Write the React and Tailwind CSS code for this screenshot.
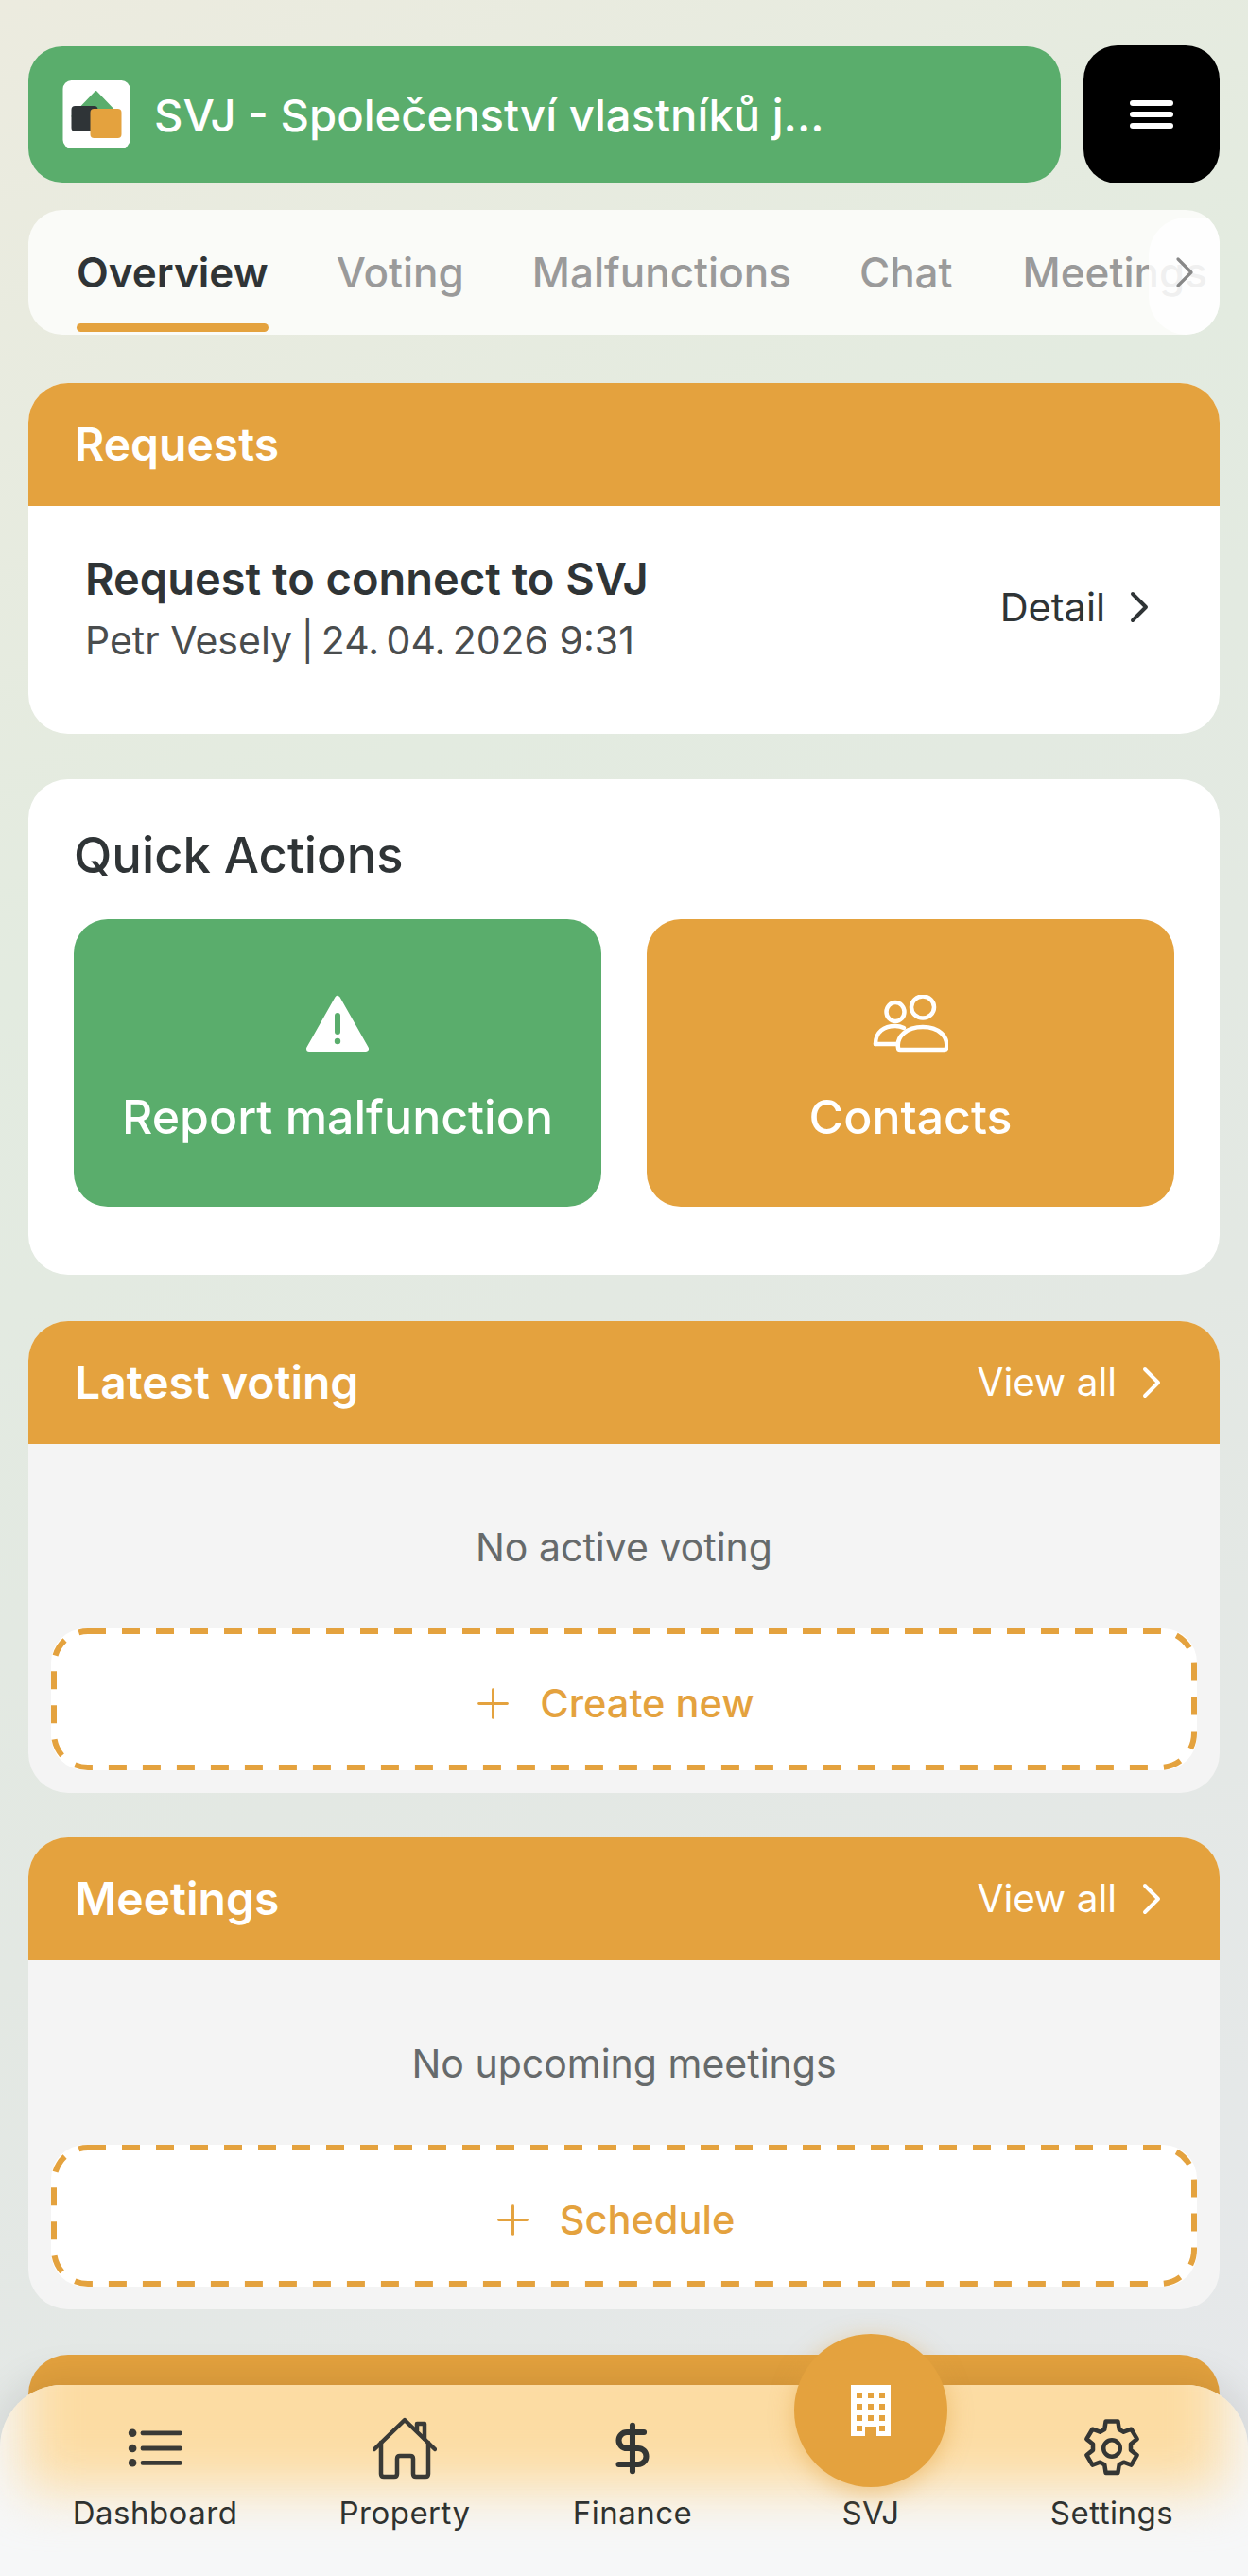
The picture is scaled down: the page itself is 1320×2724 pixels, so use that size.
import React from "react";
import { ChevronRight, Plus, DollarSign } from "lucide-react";

const font = { fontFamily: "Inter, 'Noto Sans', sans-serif" };

function Logo() {
  return (
    <svg width="72" height="72" viewBox="0 0 71 72" className="shrink-0">
      <rect width="71" height="72" rx="9" fill="#fff" />
      <path d="M35 12 L60 38 L10 38 Z" fill="#5aad6c" strokeLinejoin="round" stroke="#5aad6c" strokeWidth="2" />
      <rect x="9" y="27" width="28" height="27" rx="4" fill="#2f3437" />
      <rect x="29" y="30" width="33" height="31" rx="4" fill="#e4a23e" />
    </svg>
  );
}

function WarnIcon() {
  return (
    <svg width="66" height="62" viewBox="0 0 66 62">
      <path d="M33 4 L63 57 H3 Z" fill="#fff" stroke="#fff" strokeWidth="6" strokeLinejoin="round" />
      <rect x="30" y="19" width="6" height="23" rx="3" fill="#5aad6c" />
      <circle cx="33" cy="49" r="3.2" fill="#5aad6c" />
    </svg>
  );
}

function UsersIcon() {
  return (
    <svg width="80" height="62" viewBox="0 0 80 62" fill="none" stroke="#fff" strokeWidth="4.5" strokeLinecap="round" strokeLinejoin="round">
      <ellipse cx="24" cy="18" rx="9.5" ry="10" />
      <ellipse cx="53" cy="13" rx="12" ry="11.5" />
      <path d="M3 52 C3 39 12 33 24 33 C28 33 31 34 33 35" />
      <path d="M3 52 H25" />
      <path d="M27 56 C25 44 36 34 53 34 C70 34 80 44 78 56 C78 57.5 77 58 76 58 H29 C28 58 27 57.5 27 56 Z" />
    </svg>
  );
}

function HouseIcon() {
  return (
    <svg width="68" height="66" viewBox="0 0 68 66" fill="none" stroke="#3a3a36" strokeWidth="4.5" strokeLinecap="round" strokeLinejoin="round">
      <path d="M2 34 L34 3 L66 34" />
      <path d="M47 14 V7 H55 V23" />
      <path d="M9 27 V60 Q9 63 12 63 H23 Q26 63 26 60 V44 Q26 41 29 41 H40 Q43 41 43 44 V60 Q43 63 46 63 H56 Q59 63 59 60 V27" />
    </svg>
  );
}

function ListIcon() {
  return (
    <svg width="58" height="42" viewBox="0 0 60 44" fill="#3a3a36">
      <circle cx="5" cy="5" r="4.5" />
      <circle cx="5" cy="22" r="4.5" />
      <circle cx="5" cy="38" r="4.5" />
      <rect x="14" y="2.5" width="46" height="5" rx="2" />
      <rect x="14" y="19.5" width="46" height="5" rx="2" />
      <rect x="14" y="35.5" width="46" height="5" rx="2" />
    </svg>
  );
}

function GearIcon() {
  return (
    <svg width="64" height="66" viewBox="0 0 24 24" fill="none" stroke="#343634" strokeWidth="1.7" strokeLinejoin="round">
      <path d="M9.6 1.3h4.8l.5 3.2 1.8 1 3-1.1 2.3 3.9-2.5 2v2.4l2.5 2-2.3 3.9-3-1.1-1.8 1-.5 3.2H9.6l-.5-3.2-1.8-1-3 1.1-2.3-3.9 2.5-2v-2.4l-2.5-2 2.3-3.9 3 1.1 1.8-1z" />
      <circle cx="12" cy="12" r="3.3" />
    </svg>
  );
}

function BuildingIcon() {
  return (
    <svg width="42" height="54" viewBox="0 0 42 54">
      <path fill="#fff" d="M0 0H42V54H27V44H15V54H0Z" />
      <g fill="#e4a23e">
        <rect x="6" y="8" width="6" height="6" /><rect x="18" y="8" width="6" height="6" /><rect x="30" y="8" width="6" height="6" />
        <rect x="6" y="20" width="6" height="6" /><rect x="18" y="20" width="6" height="6" /><rect x="30" y="20" width="6" height="6" />
        <rect x="6" y="32" width="6" height="6" /><rect x="18" y="32" width="6" height="6" /><rect x="30" y="32" width="6" height="6" />
        <rect x="6" y="43" width="6" height="6" /><rect x="30" y="43" width="6" height="6" />
      </g>
    </svg>
  );
}

function SectionHeader({ title, action }) {
  return (
    <div className="h-[130px] bg-[#e4a23e] flex items-center justify-between pl-[49px] pr-[44px]">
      <span className="text-[48px] font-semibold text-white leading-none">{title}</span>
      {action && (
        <span className="flex items-center gap-[9px] text-[40.5px] text-white">
          {action}
          <ChevronRight size={56} strokeWidth={1.7} />
        </span>
      )}
    </div>
  );
}

function EmptyCard({ title, empty, cta }) {
  return (
    <section className="rounded-[42px] overflow-hidden bg-[#f4f4f4]">
      <SectionHeader title={title} action="View all" />
      <div className="px-[24px] pb-[24px]">
        <p className="h-[195px] pt-[24px] flex items-center justify-center text-[41px] text-[#666a6b]">{empty}</p>
        <div className="relative h-[150px] rounded-[36px] bg-white flex items-center justify-center gap-[24px] pt-[8px] pr-[26px] text-[41.5px] font-medium text-[#e4a23e]">
          <svg className="absolute inset-0" width="1212" height="150" fill="none">
            <rect x="3" y="3" width="1206" height="144" rx="36" stroke="#e4a23e" strokeWidth="6" strokeDasharray="19 17" />
          </svg>
          <Plus size={51} strokeWidth={1.4} />
          {cta}
        </div>
      </div>
    </section>
  );
}

function NavItem({ icon, label, className }) {
  return (
    <div className={`flex flex-col items-center ${className}`}>
      <div className="h-[66px] flex items-center justify-center">{icon}</div>
      <span className="mt-[15px] text-[33px] font-normal leading-[40px] text-[#2f3230] tracking-[0.5px]">{label}</span>
    </div>
  );
}

export default function App() {
  return (
    <div style={font} className="relative h-[2724px] w-[1320px] overflow-hidden bg-[linear-gradient(150deg,#ecebdf_0%,#e3ebe0_30%,#e3e8e3_60%,#e6e8eb_100%)]">
      <div className="px-[30px] pt-[48px] flex flex-col">
        <header className="flex gap-[24px] items-center">
          <div className="flex-1 h-[144px] rounded-[36px] bg-[#5aad6c] flex items-center pl-[36px] gap-[25px]">
            <Logo />
            <span className="text-[47.2px] pt-[2px] font-medium text-white leading-none">SVJ - Společenství vlastníků j...</span>
          </div>
          <button className="w-[144px] h-[146px] rounded-[36px] bg-black flex flex-col items-center justify-center gap-[6px]">
            <span className="block w-[46px] h-[6px] rounded-full bg-white" />
            <span className="block w-[46px] h-[6px] rounded-full bg-white" />
            <span className="block w-[46px] h-[6px] rounded-full bg-white" />
          </button>
        </header>

        <nav className="mt-[28px] relative h-[132px] rounded-[36px] bg-[#fafbf8] overflow-hidden flex gap-[72px] pl-[51px] text-[44px] font-medium text-[#9a9a9a]">
          <div className="relative h-full flex items-center text-[#2f3436] font-semibold">
            Overview
            <span className="absolute left-0 right-0 bottom-[3px] h-[9px] rounded-full bg-[#e4a23e]" />
          </div>
          <div className="h-full flex items-center">Voting</div>
          <div className="h-full flex items-center">Malfunctions</div>
          <div className="h-full flex items-center">Chat</div>
          <div className="h-full flex items-center whitespace-nowrap pl-[2px]">Meetings</div>
          <div className="absolute right-0 top-[8px] bottom-0 w-[75px] rounded-l-[40px] bg-white/85 flex items-center justify-center pb-[8px] text-[#888]">
            <ChevronRight size={56} strokeWidth={1.4} />
          </div>
        </nav>

        <section className="mt-[51px] rounded-[42px] overflow-hidden bg-white">
          <SectionHeader title="Requests" />
          <div className="h-[241px] flex items-center justify-between pl-[60px] pr-[57px] pb-[27px]">
            <div>
              <div className="text-[47px] font-semibold text-[#2f3436] leading-[58px]">Request to connect to SVJ</div>
              <div className="mt-[11px] text-[41px] text-[#4a4d4e] leading-[50px]">
                Petr Vesely<span className="tracking-[-2px]"> | </span>24.{"\u202f"}04.{"\u202f"}2026 9:31
              </div>
            </div>
            <span className="flex items-center gap-[8px] text-[41.5px] text-[#2f3436]">
              Detail
              <ChevronRight size={56} strokeWidth={1.7} />
            </span>
          </div>
        </section>

        <section className="mt-[48px] h-[524px] rounded-[42px] bg-white px-[48px] pt-[50px]">
          <h2 className="text-[52.5px] font-medium text-[#2f3436] leading-[60px]">Quick Actions</h2>
          <div className="mt-[38px] grid grid-cols-2 gap-[48px]">
            <div className="h-[304px] rounded-[36px] bg-[#5aad6c] flex flex-col items-center pt-[80px] gap-[38px] text-white">
              <WarnIcon />
              <span className="text-[50px] font-medium leading-[58px]">Report malfunction</span>
            </div>
            <div className="h-[304px] rounded-[36px] bg-[#e4a23e] flex flex-col items-center pt-[80px] gap-[38px] text-white">
              <UsersIcon />
              <span className="text-[50px] font-medium leading-[58px]">Contacts</span>
            </div>
          </div>
        </section>

        <div className="mt-[49px]">
          <EmptyCard title="Latest voting" empty="No active voting" cta="Create new" />
        </div>
        <div className="mt-[47px]">
          <EmptyCard title="Meetings" empty="No upcoming meetings" cta="Schedule" />
        </div>
        <section className="mt-[48px] h-[200px] rounded-[42px] bg-[#e4a23e]" />
      </div>

      <div className="absolute left-0 right-0 bottom-0 h-[202px] rounded-t-[66px] overflow-hidden bg-[#f6f7f8] shadow-[0_-8px_40px_rgba(0,0,0,0.1)]">
        <div className="absolute left-[24px] right-[24px] -top-[60px] h-[170px] bg-[#fcdca3] blur-[28px]" />
      </div>
      <div className="absolute left-0 right-0 bottom-0 h-[202px] flex items-start pt-[34px]">
        <NavItem className="w-[328px]" icon={<ListIcon />} label="Dashboard" />
        <NavItem className="w-[200px]" icon={<HouseIcon />} label="Property" />
        <NavItem className="w-[282px]" icon={<DollarSign size={58} strokeWidth={2.5} className="text-[#333634]" />} label="Finance" />
        <NavItem
          className="w-[222px] relative"
          icon={
            <div className="absolute left-[30px] -top-[88px] w-[162px] h-[162px] rounded-full bg-[#e4a23e] flex items-center justify-center shadow-[0_6px_24px_rgba(228,162,62,0.5)]">
              <BuildingIcon />
            </div>
          }
          label="SVJ"
        />
        <NavItem className="w-[288px]" icon={<GearIcon />} label="Settings" />
      </div>
    </div>
  );
}
